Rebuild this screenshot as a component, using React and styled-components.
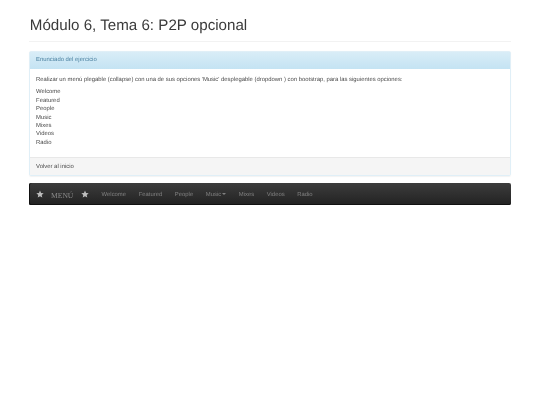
import React from "react";
import styled, { createGlobalStyle } from "styled-components";

const links = ["Welcome", "Featured", "People", "Music", "Mixes", "Videos", "Radio"];

function Star() {
  return (
    <StarIcon viewBox="0 0 24 24">
      <path d="M12 1.5l3.2 7.2 7.8.8-5.9 5.2 1.7 7.7L12 18.4l-6.8 4 1.7-7.7L1 9.5l7.8-.8z" />
    </StarIcon>
  );
}

function App() {
  return (
    <Page>
      <GlobalStyle />
      <Header>
        <Title>Módulo 6, Tema 6: P2P opcional</Title>
      </Header>

      <Panel>
        <PanelHeading>Enunciado del ejercicio</PanelHeading>
        <PanelBody>
          <Statement>
            Realizar un menú plegable (collapse) con una de sus opciones 'Music' desplegable (dropdown ) con bootstrap, para las siguientes opciones:
          </Statement>
          <OptionList>
            {links.map((link) => (
              <div key={link}>{link}</div>
            ))}
          </OptionList>
        </PanelBody>
        <PanelFooter>Volver al inicio</PanelFooter>
      </Panel>

      <Navbar>
        <Brand>
          <Star />
          <BrandText>MENÚ</BrandText>
          <Star />
        </Brand>
        <NavList>
          {links.map((link) => (
            <NavItem key={link}>
              {link}
              {link === "Music" && <Caret />}
            </NavItem>
          ))}
        </NavList>
      </Navbar>
    </Page>
  );
}

export default App;

const GlobalStyle = createGlobalStyle`
  html, body {
    margin: 0;
    background: #fff;
  }
  body {
    font-family: "Liberation Sans", Arial, sans-serif;
    font-size: 5.9px;
    line-height: 8.4px;
    color: #4a4a4a;
    text-rendering: geometricPrecision;
  }
`;

const Page = styled.div`
  width: 481.4px;
  margin-left: 29.3px;
  padding-top: 17px;
  filter: blur(0.4px);
`;

const Header = styled.div`
  height: 24px;
  border-bottom: 1px solid #f2f2f2;
  margin-bottom: 9px;
`;

const Title = styled.h1`
  margin: 0;
  padding-left: 0.5px;
  font-size: 15.15px;
  line-height: 18px;
  font-weight: 500;
  color: #3a3a3a;
`;

const Panel = styled.div`
  border: 1px solid #e0eff7;
  border-radius: 2px;
  background: #fff;
  box-shadow: 0 0.5px 1px rgba(0, 0, 0, 0.05);
`;

const PanelHeading = styled.div`
  height: 17px;
  padding: 0 5.8px;
  line-height: 17px;
  color: #4a80a0;
  background: linear-gradient(to bottom, #d9edf7, #c4e3f3);
`;

const PanelBody = styled.div`
  height: 88px;
  padding: 6.8px 5.8px;
  box-sizing: border-box;
`;

const Statement = styled.p`
  margin: 0 0 4.2px;
`;

const OptionList = styled.div``;

const PanelFooter = styled.div`
  height: 17px;
  padding: 0 5.8px;
  line-height: 18px;
  background: #f5f5f5;
  border-top: 1px solid #e8e8e8;
`;

const Navbar = styled.nav`
  display: flex;
  align-items: center;
  height: 22px;
  margin-top: 6.5px;
  padding-left: 1px;
  border-radius: 2px;
  background: linear-gradient(to bottom, #3c3c3c, #222);
  box-shadow: inset 0 -1px 0 #111, inset 1px 0 0 #111;
`;

const Brand = styled.div`
  display: flex;
  align-items: center;
  width: 65px;
  padding-left: 5.7px;
  box-sizing: border-box;
`;

const StarIcon = styled.svg`
  width: 8px;
  height: 8px;
  fill: #bdbdbd;
  flex: none;
`;

const BrandText = styled.span`
  margin: 5px 8px 0 7px;
  font-family: "Liberation Serif", "Times New Roman", serif;
  font-size: 7.6px;
  color: #8a8a8a;
`;

const NavList = styled.div`
  display: flex;
  align-items: center;
`;

const NavItem = styled.div`
  display: flex;
  align-items: center;
  padding: 3px 6.3px 0;
  color: #808080;
`;

const Caret = styled.span`
  width: 0;
  height: 0;
  margin: 0 0 1.5px 1px;
  border-top: 2px solid #808080;
  border-left: 2px solid transparent;
  border-right: 2px solid transparent;
`;
